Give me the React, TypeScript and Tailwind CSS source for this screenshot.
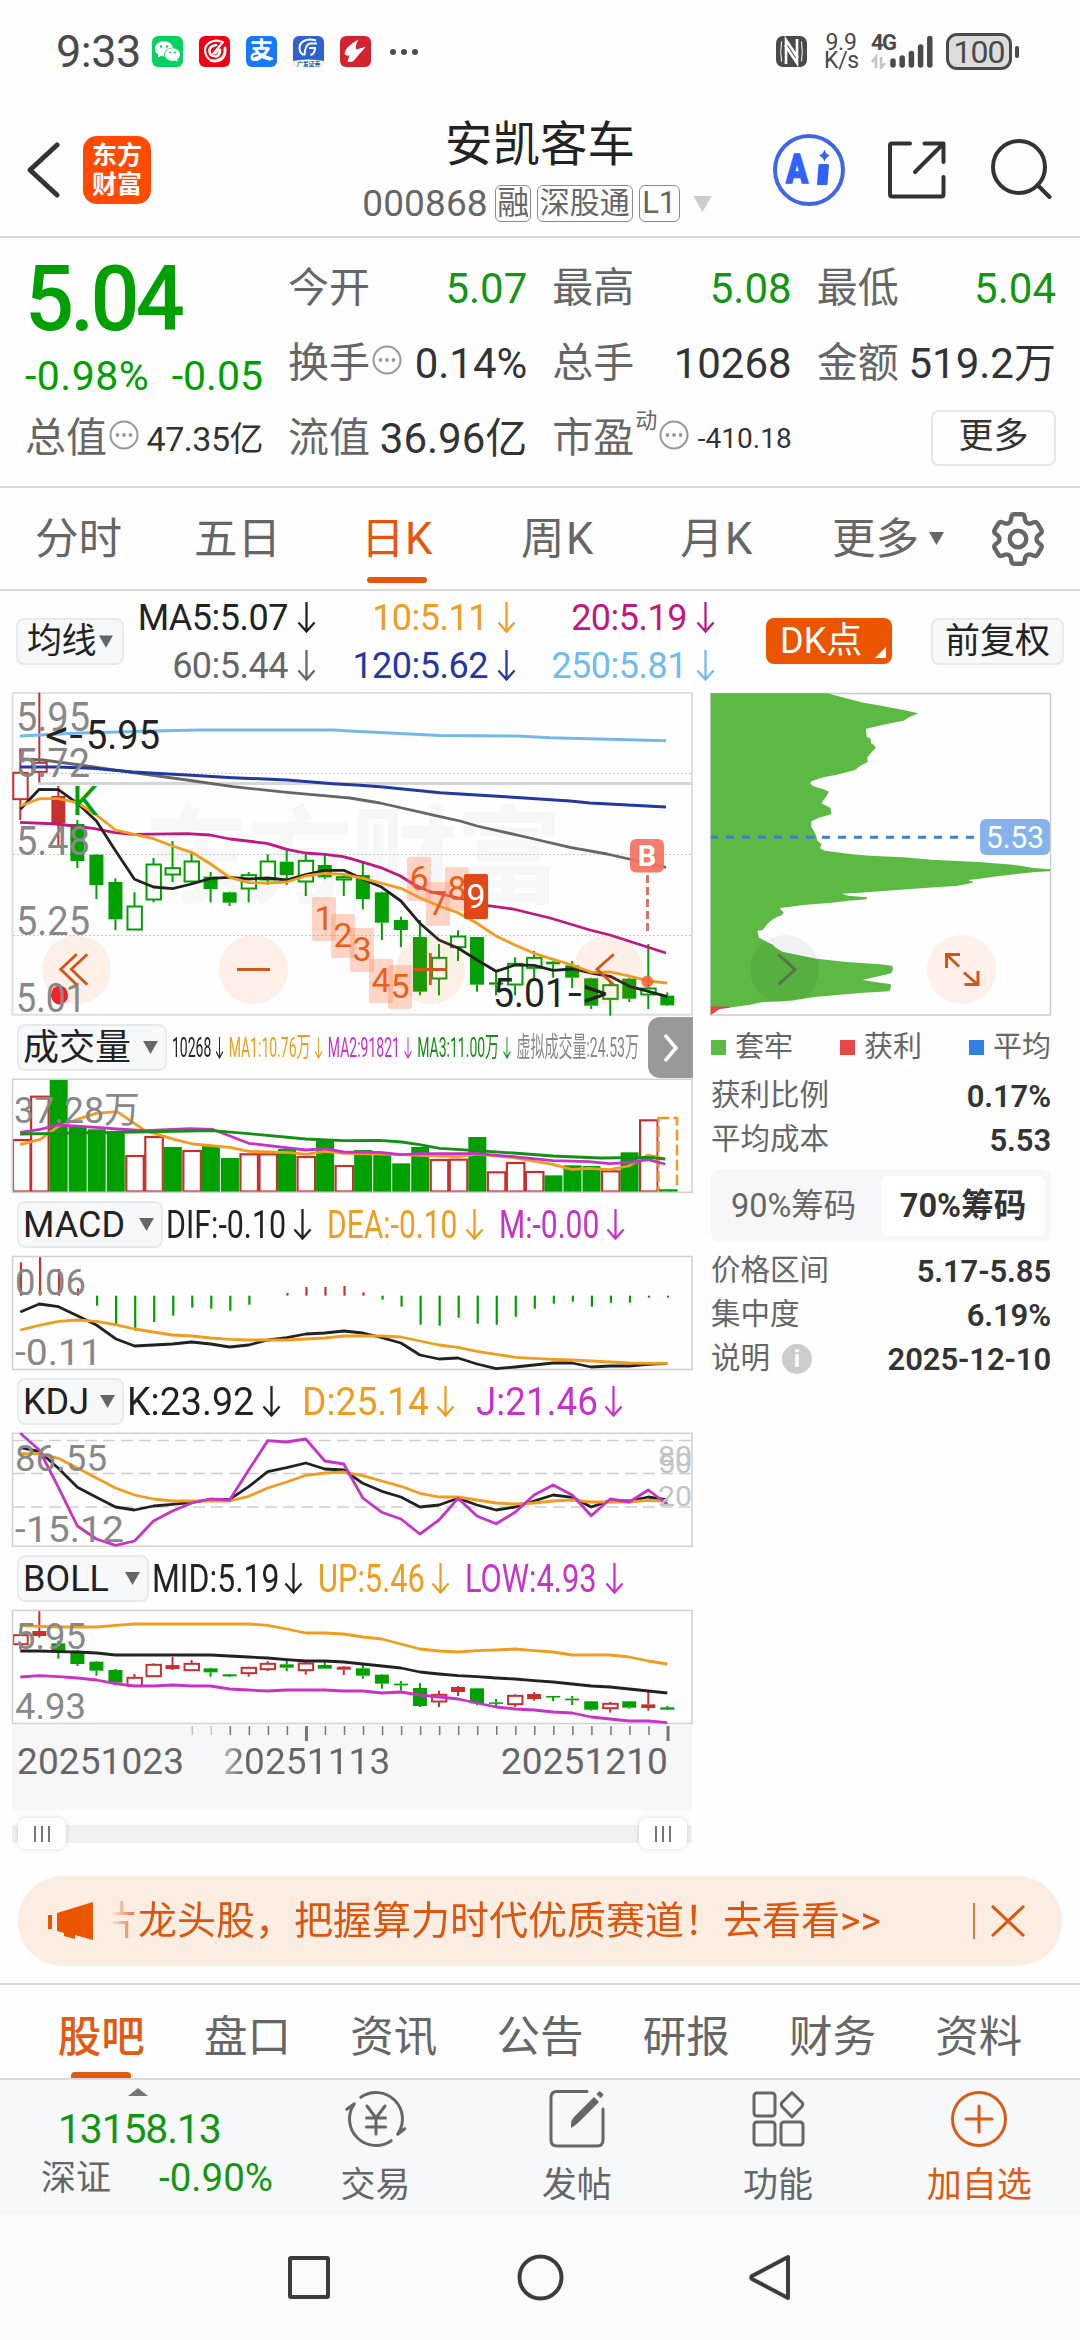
import React from 'react';
import { IoLogoWechat } from 'react-icons/io5';
import { HiOutlineCog6Tooth } from 'react-icons/hi2';

const FONT = "font-[Roboto,'Noto_Sans_CJK_SC',sans-serif]";
const GREEN = '#00a000';
const RED = '#c8302e';
const ORANGE = '#f09c1e';
const PURPLE = '#c832c8';
const BLACK = '#222222';

// x of the n-th trading day, shared by every chart
const dayX = (i: number) => 20.3 + 19.03 * i;

type Candle = [kind: string, high: number, top: number, bottom: number, low: number];

// kind: first letter h = hollow / f = filled, second r = red / g = green
const CANDLES: Candle[] = [
  ['hr', 205, 277, 359, 420], ['hr', 38, 247, 277, 307], ['fr', 318, 348, 430, 500], ['fg', 420, 432, 543, 564],
  ['fg', 522, 524, 615, 657], ['fg', 595, 606, 718, 750], ['hg', 637, 678, 750, 750], ['hg', 534, 552, 660, 667],
  ['hg', 483, 563, 585, 606], ['hg', 513, 543, 606, 612], ['fg', 576, 590, 627, 667], ['fg', 635, 637, 668, 678],
  ['hg', 576, 584, 627, 667], ['hg', 523, 543, 600, 615], ['fg', 510, 545, 585, 615], ['hg', 523, 541, 606, 648],
  ['fg', 523, 555, 592, 597], ['hg', 580, 590, 600, 648], ['fg', 548, 585, 657, 688], ['fg', 635, 637, 728, 780],
  ['fg', 710, 720, 750, 801], ['fg', 720, 771, 935, 946], ['hg', 792, 832, 897, 946], ['hg', 751, 768, 803, 843],
  ['fg', 771, 771, 914, 935], ['fg', 875, 907, 914, 946], ['hg', 832, 850, 915, 946], ['hg', 813, 832, 865, 897],
  ['fg', 843, 845, 853, 893], ['fg', 843, 856, 893, 924], ['fg', 893, 895, 977, 987], ['hg', 905, 914, 958, 1007],
  ['fg', 893, 896, 956, 966], ['hg', 792, 924, 945, 987], ['fg', 937, 947, 976, 978],
];

const MA5 = [388, 328, 329, 370, 423, 512, 598, 621, 626, 612, 595, 592, 597, 594, 600, 584, 571, 571, 597, 622, 663, 730, 780, 804, 840, 874, 855, 856, 871, 867, 879, 889, 919, 934, 950];
const MA10 = [378, 356, 356, 368, 405, 450, 463, 476, 498, 517, 552, 592, 608, 609, 606, 588, 580, 583, 595, 610, 625, 653, 678, 698, 730, 768, 795, 820, 838, 855, 877, 876, 888, 903, 909];

const VOLUMES: [string, number][] = [
  ['r', 387], ['r', 257], ['g', 210], ['g', 350], ['g', 358], ['g', 365], ['r', 435], ['r', 378], ['g', 411],
  ['r', 420], ['g', 408], ['g', 444], ['r', 430], ['r', 430], ['g', 417], ['r', 438], ['g', 393], ['r', 465],
  ['g', 420], ['g', 430], ['g', 460], ['g', 411], ['r', 447], ['r', 446], ['g', 381], ['r', 484], ['r', 456],
  ['r', 483], ['g', 496], ['g', 466], ['g', 468], ['r', 481], ['g', 427], ['r', 328],
];

const MACD_BARS = [757, 739, 777, 835, 887, 944, 962, 936, 917, 893, 896, 902, 884, 857, 849, 831, 831, 828, 847, 869, 890, 944, 947, 923, 941, 944, 920, 896, 881, 875, 890, 878, 878, 863, 863];
const DIF = [906, 882, 890, 917, 945, 986, 1008, 1005, 1002, 996, 1002, 1011, 1005, 990, 983, 972, 969, 963, 969, 983, 999, 1035, 1047, 1044, 1062, 1076, 1071, 1065, 1059, 1059, 1071, 1068, 1068, 1063, 1060];
const DEA = [960, 946, 934, 930, 934, 944, 957, 966, 975, 978, 984, 988, 990, 990, 990, 987, 984, 978, 978, 978, 981, 993, 1005, 1012, 1024, 1033, 1042, 1045, 1048, 1050, 1053, 1056, 1059, 1060, 1060];

const KDJ_K = [233, 244, 295, 352, 382, 411, 420, 408, 403, 397, 388, 388, 350, 305, 293, 279, 297, 300, 340, 364, 381, 411, 405, 385, 405, 420, 411, 393, 375, 382, 411, 392, 393, 381, 390];
const KDJ_D = [252, 250, 265, 294, 324, 354, 375, 387, 393, 393, 393, 393, 379, 354, 336, 316, 309, 306, 317, 333, 349, 370, 381, 381, 390, 399, 402, 399, 393, 390, 396, 396, 396, 391, 393];
const KDJ_J = [190, 240, 352, 468, 507, 526, 513, 453, 423, 399, 387, 390, 300, 212, 216, 207, 273, 282, 384, 427, 447, 492, 450, 385, 438, 461, 427, 375, 345, 375, 437, 387, 396, 360, 403];

const BOLL_UP = [766, 769, 771, 771, 771, 766, 762, 762, 762, 762, 762, 762, 762, 766, 777, 789, 789, 792, 801, 807, 822, 837, 843, 846, 842, 840, 837, 842, 846, 855, 855, 855, 861, 873, 882];
const BOLL_MID = [843, 843, 845, 846, 849, 855, 855, 855, 855, 855, 855, 858, 861, 864, 869, 873, 873, 876, 882, 888, 894, 906, 912, 917, 920, 924, 927, 932, 936, 942, 948, 951, 957, 963, 969];
const BOLL_LOW = [921, 917, 920, 924, 930, 941, 948, 948, 945, 948, 948, 957, 960, 963, 960, 960, 960, 963, 963, 969, 966, 975, 981, 987, 999, 1011, 1017, 1020, 1026, 1029, 1041, 1047, 1053, 1053, 1058];
const BOLL_CANDLES: Candle[] = [
  ['hr', 785, 794, 824, 838], ['fr', 720, 783, 798, 803], ['fg', 812, 820, 847, 866], ['fg', 840, 847, 882, 888],
  ['fg', 873, 875, 902, 917], ['fg', 897, 900, 938, 946], ['hr', 912, 922, 949, 950], ['hr', 880, 883, 920, 921],
  ['fr', 861, 885, 897, 900], ['hr', 870, 880, 902, 903], ['fg', 893, 895, 907, 920], ['fg', 912, 913, 919, 921],
  ['hr', 890, 892, 911, 920], ['hr', 873, 880, 899, 903], ['fg', 868, 883, 893, 903], ['hr', 873, 879, 902, 914],
  ['fg', 873, 885, 896, 896], ['fr', 888, 890, 899, 915], ['fg', 885, 895, 917, 926], ['fg', 912, 914, 941, 956],
  ['fg', 933, 941, 946, 962], ['fg', 939, 954, 1008, 1011], ['hr', 962, 973, 996, 1011], ['fr', 948, 951, 966, 978],
  ['fg', 954, 955, 1000, 1006], ['fg', 987, 997, 1001, 1008], ['hr', 973, 976, 1004, 1011], ['fr', 966, 972, 987, 992],
  ['fg', 978, 978, 981, 993], ['fg', 978, 986, 991, 1005], ['fg', 993, 994, 1019, 1022], ['hr', 996, 1000, 1016, 1028],
  ['fg', 993, 994, 1013, 1016], ['fr', 963, 1003, 1014, 1022], ['fg', 1008, 1012, 1019, 1020],
];

const CHIPS = '410,40 440,47 520,68 562,75 640,90 685,100 660,110 640,122 590,132 528,146 530,170 542,176 543,190 552,195 557,204 546,215 532,232 533,246 510,258 495,270 440,284 400,292 368,302 360,310 370,319 400,328 417,335 408,350 394,370 422,384 424,402 385,414 364,424 364,440 378,465 382,482 395,492 390,505 405,512 480,522 540,527 640,532 725,539 865,546 970,554 1030,564 1080,568 1080,574 1035,576 980,582 910,590 865,597 835,600 852,607 830,612 800,618 735,622 620,630 510,638 456,641 475,647 530,652 530,658 475,662 425,668 340,675 300,680 270,684 273,690 281,697 276,706 262,710 245,720 232,732 218,750 202,752 207,773 230,785 250,795 255,802 277,815 320,824 380,836 470,846 570,853 607,857 609,868 604,880 585,884 545,893 517,900 560,907 603,913 602,925 598,934 520,938 380,950 300,962 215,967 180,974 125,982 62,982 62,40';

const scale = (origin: number, data: number[]) =>
  data.map((v, i) => `${dayX(i).toFixed(1)},${(origin + v / 3).toFixed(1)}`).join(' ');

const squeeze = (points: [number, number][]) =>
  points.map(([x, y]) => `${(x / 2.24).toFixed(1)},${(1010 + y / 3).toFixed(1)}`).join(' ');

const Line = ({ points, color, width = 2.8 }: { points: string; color: string; width?: number }) => (
  <polyline points={points} fill="none" stroke={color} strokeWidth={width} strokeLinejoin="round" />
);

const Candles = ({ data, origin }: { data: Candle[]; origin: number }) => (
  <g>
    {data.map(([kind, high, top, bottom, low], i) => {
      const x = dayX(i);
      const color = kind[1] === 'r' ? RED : GREEN;
      const [h, t, b, l] = [high, top, bottom, low].map((v) => origin + v / 3);
      return (
        <g key={i} stroke={color} strokeWidth={2}>
          <line x1={x} x2={x} y1={h} y2={t} />
          <line x1={x} x2={x} y1={b} y2={l} />
          {kind[0] === 'h' ? (
            <rect x={x - 7} y={t + 0.5} width={14.4} height={Math.max(b - t - 1, 1)} fill="#fff" />
          ) : (
            <rect x={x - 7} y={t} width={14} height={Math.max(b - t, 1.5)} fill={color} stroke="none" />
          )}
        </g>
      );
    })}
  </g>
);

type LabelProps = { x: number; y: number; w: number; size?: number; color?: string; children: string };

const Label = ({ x, y, w, size = 40, color = '#888', children }: LabelProps) => (
  <text x={x} y={y} fontSize={size} fill={color} textLength={w} lengthAdjust="spacingAndGlyphs">{children}</text>
);

const Frame = ({ top, height }: { top: number; height: number }) => (
  <rect x={12.5} y={top} width={679.5} height={height} fill="none" stroke="#d0d0d2" strokeWidth={1.5} />
);

const DownArrow = ({ className = 'w-5 h-[31px]' }: { className?: string }) => (
  <svg viewBox="0 0 20 31" className={className} fill="none" stroke="currentColor" strokeWidth={2.4} preserveAspectRatio="none">
    <path d="M10 0V29M1.5 20.5 10 29.5l8.5-9" />
  </svg>
);

const Dots = ({ className = '' }: { className?: string }) => (
  <svg viewBox="0 0 30 30" className={`w-[30px] h-[30px] shrink-0 ${className}`}>
    <circle cx="15" cy="15" r="13.5" fill="none" stroke="#999" strokeWidth="2" />
    <circle cx="8.5" cy="15" r="1.9" fill="#999" />
    <circle cx="15" cy="15" r="1.9" fill="#999" />
    <circle cx="21.5" cy="15" r="1.9" fill="#999" />
  </svg>
);

const Caret = ({ className }: { className: string }) => (
  <svg viewBox="0 0 16 14" className={className} fill="currentColor"><path d="M0 0h16L8 14z" /></svg>
);

const StatusBar = () => (
  <div className="h-[104px] px-[55px] pb-px flex items-center text-[#4a4a4a]">
    <span className="text-[45px] leading-none tracking-[-0.5px] w-[97px] pl-px">9:33</span>
    <div className="flex gap-4 text-white">
      <div className="w-[31px] h-[31px] rounded-md bg-[#07d160] flex items-center justify-center">
        <IoLogoWechat size={25} />
      </div>
      <svg viewBox="0 0 31 31" className="w-[31px] h-[31px] rounded-md bg-[#f00014]" fill="none" stroke="currentColor" strokeLinecap="round">
        <path d="M22 5.5A11.5 9.5 0 0 0 6 14q.5 6 4 9" strokeWidth="2.2" />
        <path d="M17 9q-7 1-6.500 6.500Q11 20 15 20" strokeWidth="2.600" />
        <path d="M24 6 14.500 17.500q3 0 4.500-4" strokeWidth="2.200" />
        <path d="M26 12q1 12-10 13l-4-.5M21 14q0 5-4 6.500" strokeWidth="2.800" />
      </svg>
      <div className="w-[31px] h-[31px] rounded-md bg-[#1677ff] relative flex justify-center">
        <span className="text-[23px] leading-[29px] font-bold">支</span>
        <svg viewBox="0 0 31 31" className="absolute inset-0" fill="none" stroke="currentColor" strokeWidth="2.200">
          <path d="M13 17.500c-8-1-9.500 6-4 6.500 5 .3 7-4 8.500-6.500M15 18q6 3.500 12 5" />
        </svg>
      </div>
      <div className="w-[31px] h-[31px] rounded-md bg-[#2f62cf] relative overflow-hidden">
        <svg viewBox="0 0 31 31" className="absolute inset-0" fill="none" stroke="currentColor" strokeWidth="2">
          <path d="M23 4.500C13 1.500 6 6 6.500 13q.5 4 4 6M24 7.500H17q-5 1-5.500 12M23 12h-7M22 12q0 6-4.500 7" />
          <path d="M0 25q15-3 31 0v6H0z" fill="#fff" stroke="none" />
        </svg>
        <span className="absolute bottom-0 left-1 text-[6px] leading-[6px] tracking-[-0.2px] font-bold text-[#2f55b0]">广发证券</span>
      </div>
      <svg viewBox="0 0 31 31" className="w-[31px] h-[31px] rounded-md bg-[#d2232e]" fill="currentColor">
        <path d="M18.500 3.500Q5.500 10.500 4.500 17.500q.5 2.500 5 2l-2 6q5 2 8-3L26 10.500l-9.500 3q-2-3 2-10z" />
      </svg>
    </div>
    <div className="flex gap-[5px] ml-[19px]">
      <i className="w-[6px] h-[6px] rounded-full bg-current" />
      <i className="w-[6px] h-[6px] rounded-full bg-current" />
      <i className="w-[6px] h-[6px] rounded-full bg-current" />
    </div>
    <div className="ml-auto flex items-center mr-[6px]">
      <svg viewBox="0 0 31 31" className="w-[31px] h-[31px]">
        <rect width="31" height="31" rx="7" fill="currentColor" />
        <path d="M5.500 5.500q-1.500 10 0 20M25.500 5.500q1.500 10 0 20" fill="none" stroke="#fff" strokeWidth="1" />
        <path d="M10 28V4l12 18M21 3v24L9 9" fill="none" stroke="#fff" strokeWidth="2.600" />
      </svg>
      <div className="ml-[17px] w-[34px] text-[23px] leading-[18px] text-center tracking-[-0.300px]">
        <div>9.9</div>
        <div>K/s</div>
      </div>
      <div className="ml-[13px] relative w-[64px] h-[35px]">
        <span className="absolute left-0 top-0 text-[22px] leading-[18px] font-bold tracking-[-1.500px]">4G</span>
        <svg viewBox="0 0 64 35" className="w-full h-full">
          <g stroke="#c4c4c4" strokeWidth="2.600" fill="none"><path d="M1 28l4-5v11M14 29l-4 5V23" /></g>
          <g stroke="currentColor" strokeWidth="5.500" strokeLinecap="round">
            <path d="M22 27v4M31.200 24v7M40.400 19.500V31M49.600 13v18M58.800 4.500V31" />
          </g>
        </svg>
      </div>
      <div className="ml-[11px] w-[66px] h-[37px] rounded-[11px] border-[3px] border-[#4a4a4a] bg-[#dcdcdc] flex items-center justify-center text-[32px] leading-none tracking-[-1px]">100</div>
      <i className="ml-[3px] w-1 h-3 rounded-sm bg-current" />
    </div>
  </div>
);

const Header = () => (
  <div className="h-[134px] border-b-2 border-[#dadada] flex items-center px-[26px] relative">
    <svg viewBox="0 0 34 56" className="w-[34px] h-[56px]" fill="none" stroke="#333" strokeWidth="5" strokeLinecap="round" strokeLinejoin="round">
      <path d="M31 3 4 28l27 25" />
    </svg>
    <div className="ml-[23px] w-[68px] h-[68px] rounded-[14px] bg-[#ff4a00] text-white font-bold text-[25px] leading-[29px] flex flex-col items-center justify-center">
      <span>东方</span>
      <span>财富</span>
    </div>
    <div className="absolute inset-x-[300px] top-0 h-full flex flex-col items-center">
      <h1 className="text-[47.500px] leading-[48px] text-[#222] mt-[17px]">安凯客车</h1>
      <div className="flex items-center mt-4 text-[#666] whitespace-nowrap -ml-1">
        <span className="text-[37px] leading-9 tracking-[0.100px]">000868</span>
        <span className="ml-[7px] w-9 h-[37px] border-[1.500px] border-[#8a8a8a] rounded-md text-[32px] leading-[34px] text-center tracking-[-1px]">融</span>
        <span className="ml-[6px] w-24 h-[37px] border-[1.500px] border-[#8a8a8a] rounded-md text-[30px] leading-[34px] text-center">深股通</span>
        <span className="ml-[6px] w-[41px] h-[37px] border-[1.500px] border-[#8a8a8a] rounded-md text-[31px] leading-[34px] text-center">L1</span>
        <Caret className="ml-[11px] w-[23px] h-4 text-[#ccc]" />
      </div>
    </div>
    <div className="ml-auto flex items-center mr-[2px]">
      <svg viewBox="0 0 74 74" className="w-[74px] h-[74px]">
        <circle cx="37" cy="37" r="34" fill="none" stroke="#3f66e8" strokeWidth="4" />
        <text x="14" y="50" fontSize="41" fontWeight="900" fill="#2f62ff" stroke="#2f62ff" strokeWidth="1.500" textLength="22" lengthAdjust="spacingAndGlyphs">A</text>
        <path d="M47.500 32h8.500l-1.500 19H46z" fill="#2f62ff" stroke="#2f62ff" strokeWidth="2" strokeLinejoin="round" />
        <path d="M52.500 16.500q1.500 5 5.500 6-4 1.500-5.500 6-1.500-4.500-5.500-6 4-1 5.500-6z" fill="#2f62ff" />
      </svg>
      <svg viewBox="0 0 60 60" className="ml-[41px] w-[60px] h-[60px]" fill="none" stroke="#333" strokeWidth="4" strokeLinecap="round" strokeLinejoin="round">
        <path d="M23 3.500H5q-2 0-2 2V54q0 2.500 2 2.500h49.500q2 0 2-2.500V37M37.500 3.500h19V22M56 4 28 32" />
      </svg>
      <svg viewBox="0 0 62 62" className="ml-[43px] w-[62px] h-[62px]" fill="none" stroke="#333" strokeWidth="4" strokeLinecap="round">
        <circle cx="29" cy="28" r="26" />
        <path d="M47.500 46 59.500 58" />
      </svg>
    </div>
  </div>
);

const Stat = ({ label, value, info, color = 'text-[#333]' }: { label: string; value: string; info?: boolean; color?: string }) => (
  <div className="flex items-center h-[75px] whitespace-nowrap">
    <span className="text-[41px] leading-none text-[#666]">{label}</span>
    {info && <Dots className="ml-[2px] -mt-2" />}
    <span className={`ml-auto text-[42px] leading-none ${color}`}>{value}</span>
  </div>
);

const Quote = () => (
  <div className="h-[250px] border-b-2 border-[#dadada] pl-[25px] pr-[24px] pt-[13px] flex text-[#333]">
    <div className="w-[238px] whitespace-nowrap">
      <div className="text-[90px] leading-[98px] h-[98px] font-medium tracking-[-4px] text-[#00a000] origin-left scale-x-[0.960]">5.04</div>
      <div className="flex justify-between text-[41px] leading-none text-[#00a000] h-[50px] items-center mt-[2px] mb-px">
        <span className="tracking-[0.500px]">-0.98%</span>
        <span>-0.05</span>
      </div>
      <div className="flex items-center h-[73px]">
        <span className="text-[41px] leading-none text-[#666]">总值</span>
        <Dots className="ml-[2px] -mt-2" />
        <span className="ml-auto text-[34px] leading-none tracking-[-0.500px]">47.35亿</span>
      </div>
    </div>
    <div className="ml-[25px] flex-1 grid grid-cols-3 gap-x-[25px] content-start">
      <Stat label="今开" value="5.07" color="text-[#149614]" />
      <Stat label="最高" value="5.08" color="text-[#149614]" />
      <Stat label="最低" value="5.04" color="text-[#149614]" />
      <Stat label="换手" value="0.14%" info />
      <Stat label="总手" value="10268" />
      <Stat label="金额" value="519.2万" />
      <Stat label="流值" value="36.96亿" />
      <div className="flex items-center h-[75px] whitespace-nowrap">
        <span className="text-[41px] leading-none text-[#666]">市盈</span>
        <span className="text-[22px] leading-none text-[#666] -mt-9 ml-px">动</span>
        <Dots className="ml-[2px] -mt-2" />
        <span className="ml-auto text-[28px] leading-none">-410.18</span>
      </div>
      <div className="flex items-center justify-end h-[75px]">
        <button className="w-[125px] h-[56px] border-2 border-[#e6e6e6] rounded-lg text-[35px] leading-none pb-[3px] mb-[2px]">更多</button>
      </div>
    </div>
  </div>
);

const PERIODS = [
  { name: '分时', box: 'w-[86px]' },
  { name: '五日', box: 'w-[86px] ml-[73px]' },
  { name: '日K', box: 'w-[72px] ml-[81px] tracking-[0.500px]', active: true },
  { name: '周K', box: 'w-[74px] ml-[88px] tracking-[1.500px]' },
  { name: '月K', box: 'w-[76px] ml-[85px] tracking-[1.500px]' },
];

const Periods = () => (
  <div className="h-[103px] border-b-2 border-[#dadada] flex items-center pl-[35px] text-[43.500px] leading-none text-[#666] whitespace-nowrap">
    {PERIODS.map((p) => (
      <div key={p.name} className={`relative h-full flex items-center pt-[3px] ${p.box} ${p.active ? 'text-[#e8550a]' : ''}`}>
        {p.name}
        {p.active && <i className="absolute left-[6px] bottom-[6px] w-[60px] h-[6px] rounded-full bg-[#e8550a]" />}
      </div>
    ))}
    <span className="ml-[76px] pt-[3px]">更多</span>
    <Caret className="ml-[10px] w-[15px] h-[13px]" />
    <HiOutlineCog6Tooth className="ml-[41px] w-[66px] h-[66px]" strokeWidth={1.6} />
  </div>
);

const AVERAGES = [
  { text: 'MA5:5.07', color: 'text-[#222]' },
  { text: '10:5.11', color: 'text-[#f09c1e]' },
  { text: '20:5.19', color: 'text-[#c01880]' },
  { text: '60:5.44', color: 'text-[#666]' },
  { text: '120:5.62', color: 'text-[#2438a0]' },
  { text: '250:5.81', color: 'text-[#70bcec]' },
];

const Averages = () => (
  <div className="h-[99px] flex items-center pl-4 pr-4 pt-px whitespace-nowrap">
    <button className="w-[108px] h-[47px] border-2 border-[#e8e9ed] rounded-lg bg-[#f7f8fa] flex items-center justify-center text-[35px] leading-none text-[#222] tracking-[-0.500px]">
      <span>均线</span><Caret className="ml-[3px] w-[14px] h-[13px] text-[#666]" />
    </button>
    <div className="grid grid-cols-[192px_200px_199px] justify-items-end">
      {AVERAGES.map((a) => (
        <div key={a.text} className={`flex items-center h-12 pt-px text-[36px] leading-none tracking-[-0.500px] ${a.color}`}>
          {a.text}<DownArrow className="ml-[9px] w-[19px] h-[31px]" />
        </div>
      ))}
    </div>
    <button className="ml-[51px] w-[126px] h-[46px] rounded-lg bg-[#ec5500] text-white text-[36px] leading-none relative text-left pl-[14px]">
      DK点
      <svg viewBox="0 0 11 11" className="absolute right-[6px] bottom-[6px] w-[11px] h-[11px]" fill="#fff"><path d="M11 0v11H0z" /></svg>
    </button>
    <button className="ml-auto w-[133px] h-[47px] border-2 border-[#e8e9ed] rounded-lg bg-[#f7f8fa] text-[35px] leading-none text-[#222]">前复权</button>
  </div>
);

const MARKS: [string, number, number][] = [
  ['1', 312, 897], ['2', 331, 914], ['3', 350, 928], ['4', 369, 959], ['5', 388, 965], ['6', 407, 857], ['7', 426, 882], ['8', 445, 867],
];

const PriceChart = () => (
  <svg viewBox="0 690 700 327" className="block w-[700px] h-[327px]">
    <g fill="#f7f7f8" fontSize="106" fontWeight="700">
      <text x="143" y="895">东</text>
      <text x="247" y="895">方</text>
      <text x="351" y="895">财</text>
      <text x="456" y="895">富</text>
    </g>
    <rect x={12.5} y={693} width={679.5} height={321.700} fill="none" stroke="#dedfe2" strokeWidth={2} />
    <g stroke="#c8c8c8" strokeWidth="1" strokeDasharray="2 2">
      <path d="M13 773.500H692M13 854.500H692M13 935.500H692" />
    </g>
    <path d="M38 783.500H692" stroke="#d5d6da" strokeWidth="3" />
    <Candles data={CANDLES} origin={680} />
    <Line color="#74b9e8" points="20,736 80,733 153,731 200,730 333,730 350,731 440,735.500 517,736 550,737.700 666,740.700" width={3} />
    <Line color="#666" points="20,759 43,760 80,765 133,772.700 187,780 233,786.700 287,792.300 343,797.300 350,798 380,803 440,816.700 460,821 477,826 530,838 570,847.300 607,854 666,867.300" />
    <Line color="#2438a0" points="20,767 57,767 93,768.300 133,772 187,775 233,777.700 287,780 333,783.700 360,785.300 383,787 440,792.700 513,797.300 570,801 590,803 666,807" width={3} />
    <Line color="#c01880" points="20,822.300 57,824 93,828.300 115,832.700 133,834.300 187,833.700 210,835 230,839 267,843.300 287,849.300 305,853 325,854.300 343,856.700 350,858.300 380,867.300 400,875.700 413,884 430,891.700 463,899 488,905.700 513,909 550,918 590,930 610,935 666,953" />
    <Line color={BLACK} points={scale(680, MA5)} />
    <Line color={ORANGE} points={scale(680, MA10)} />
    <Label x={16} y={731} w={74}>5.95</Label>
    <Label x={16} y={777} w={74}>5.72</Label>
    <Label x={16} y={854.500} w={74}>5.48</Label>
    <Label x={16} y={935} w={74}>5.25</Label>
    <Label x={45} y={748.500} w={38} color={BLACK}>&lt;-</Label>
    <Label x={86} y={748.500} w={74} color={BLACK}>5.95</Label>
    <Label x={72} y={815} w={26} color={GREEN}>K</Label>
    {MARKS.map(([n, x, y]) => (
      <g key={n}>
        <rect x={x} y={y} width={24} height={44} rx={2} fill="#ff8a5c" fillOpacity={0.35} />
        <text x={x + 12} y={y + 33} fontSize={34} fill="#ea5c18" textAnchor="middle">{n}</text>
      </g>
    ))}
    <rect x={464} y={874} width={24} height={45} rx={2} fill="#e04818" />
    <text x={476} y={908} fontSize={34} fill="#fff" textAnchor="middle">9</text>
    <path d="M647.500 875v58" stroke="#d87468" strokeWidth="3" strokeDasharray="8 4" />
    <rect x={630} y={839} width={34} height={33.500} rx={6} fill="#f4705f" fillOpacity={0.92} />
    <text x={647} y={866} fontSize={29} fontWeight={700} fill="#fff" textAnchor="middle">B</text>
    <circle cx={647.300} cy={981.500} r={6} fill="#ff5a38" fillOpacity={0.85} />
    <g fill="#ff6a1a" fillOpacity={0.1}>
      <circle cx={76.500} cy={969.700} r={34.500} />
      <circle cx={253.500} cy={969.700} r={34.500} />
      <circle cx={430.500} cy={969.700} r={34.500} />
      <circle cx={608} cy={969.700} r={34.500} />
    </g>
    <ellipse cx={59.500} cy={995} rx={8.500} ry={9.500} fill="#f52222" />
    <Label x={16} y={1011.500} w={70}>5.01</Label>
    <Label x={493} y={1007} w={73} color={BLACK}>5.01</Label>
    <Label x={568} y={1007} w={40} color={BLACK}>-&gt;</Label>
    <g fill="none" stroke="#d0561a" strokeWidth="2.800">
      <path d="M76.700 954.300 60.700 969.300l16 15.400M87.300 954.300 71.300 969.300l16 15.400M237 969.500h33M414 969.500h33M430.300 953v32M613.700 954.300 597 969.300l16.700 15.400" />
    </g>
  </svg>
);

const VolumeChart = () => (
  <svg viewBox="0 1078 700 116" className="block w-[700px] h-[116px]">
    {VOLUMES.map(([kind, v], i) => {
      const top = 1010 + v / 3;
      const x = dayX(i) + 0.3;
      return kind === 'r' ? (
        <rect key={i} x={Math.max(x - 8.500, 13)} y={top + 1} width={17.500} height={1190.500 - top} fill="#fff" stroke={RED} strokeWidth={2.200} />
      ) : (
        <rect key={i} x={x - 9} y={top} width={18} height={1192 - top} fill={GREEN} />
      );
    })}
    <rect x={658.500} y={1118} width={18.500} height={73.500} fill="#fff" stroke={ORANGE} strokeWidth={2.500} strokeDasharray="11 4" />
    <path d="M659 1190.500h18" stroke={GREEN} strokeWidth="2.500" />
    <Frame top={1079.300} height={113} />
    <Line color={ORANGE} points={squeeze([[45, 404], [90, 388], [130, 350], [180, 325], [215, 310], [262, 305], [325, 362], [390, 388], [432, 402], [515, 412], [557, 424], [650, 428], [685, 433], [728, 424], [770, 430], [900, 434], [985, 438], [1026, 440], [1068, 432], [1150, 443], [1238, 463], [1280, 478], [1320, 475], [1365, 479], [1408, 468], [1452, 435], [1490, 447]])} />
    <Line color={PURPLE} points={squeeze([[45, 367], [90, 358], [130, 345], [215, 352], [262, 357], [325, 362], [425, 356], [475, 358], [515, 378], [557, 400], [685, 420], [728, 416], [770, 426], [850, 427], [900, 434], [940, 431], [1068, 431], [1150, 440], [1238, 452], [1320, 455], [1365, 461], [1408, 458], [1452, 449], [1490, 462]])} />
    <Line color="#149014" points={squeeze([[45, 372], [130, 370], [302, 366], [475, 362], [557, 371], [685, 387], [770, 392], [850, 391], [900, 396], [940, 404], [985, 415], [1068, 422], [1150, 429], [1238, 438], [1345, 444], [1452, 442], [1490, 447]])} />
    <Label x={14} y={1122.500} w={126} size={37}>37.28万</Label>
  </svg>
);

const MacdChart = () => (
  <svg viewBox="0 1255 700 116" className="block w-[700px] h-[116px]">
    {MACD_BARS.map((v, i) => (
      <path key={i} d={`M${dayX(i) + 0.7} ${1010 + v / 3}V${1010 + 857 / 3}`} stroke={v < 857 ? RED : GREEN} strokeWidth="2.200" />
    ))}
    <Frame top={1256.500} height={113} />
    <Line color={BLACK} points={scale(1010, DIF)} />
    <Line color={ORANGE} points={scale(1010, DEA)} />
    <Label x={15} y={1295} w={71} size={37}>0.06</Label>
    <Label x={15} y={1364.500} w={87} size={37}>-0.11</Label>
  </svg>
);

const KdjChart = () => (
  <svg viewBox="0 1432 700 116" className="block w-[700px] h-[116px]">
    <g stroke="#cfcfcf" strokeWidth="1.500" strokeDasharray="12 6">
      <path d="M13 1440.500H692M13 1473.500H692M13 1507H692" />
    </g>
    <Frame top={1433.300} height={113} />
    <Line color={BLACK} points={scale(1370, KDJ_K)} />
    <Line color={ORANGE} points={scale(1370, KDJ_D)} />
    <Line color={PURPLE} points={scale(1370, KDJ_J)} />
    <Label x={15} y={1471} w={92} size={37}>86.55</Label>
    <Label x={15} y={1541.500} w={109} size={37}>-15.12</Label>
    <Label x={658} y={1466} w={34} size={28} color="#c4c4c4">80</Label>
    <Label x={658} y={1473} w={34} size={28} color="#c4c4c4">50</Label>
    <Label x={658} y={1506} w={34} size={28} color="#c4c4c4">20</Label>
  </svg>
);

const BollChart = () => (
  <svg viewBox="0 1609 700 116" className="block w-[700px] h-[116px]">
    <Candles data={BOLL_CANDLES} origin={1370} />
    <Frame top={1610.500} height={113} />
    <Line color={ORANGE} points={scale(1370, BOLL_UP)} />
    <Line color={BLACK} points={scale(1370, BOLL_MID)} />
    <Line color={PURPLE} points={scale(1370, BOLL_LOW)} />
    <Label x={15} y={1649} w={71} size={37}>5.95</Label>
    <Label x={15} y={1719} w={71} size={37}>4.93</Label>
  </svg>
);

const IndicatorButton = ({ name, box }: { name: string; box: string }) => (
  <button className={`h-[47px] border-2 border-[#e8e9ed] rounded-lg bg-[#f7f8fa] flex items-center justify-between pl-[4px] pr-[7px] text-[36px] leading-none text-[#222] whitespace-nowrap shrink-0 ${box}`}>
    <span>{name}</span>
    <Caret className="w-[15px] h-[13px] text-[#666]" />
  </button>
);

// box is the room the text takes once it has been condensed
type Reading = { text: string; color: string; box: string; fit: string };

const Readings = ({ name, box, gap, items }: { name: string; box: string; gap: string; items: Reading[] }) => (
  <div className="h-[61px] pl-[17px] flex items-center whitespace-nowrap">
    <IndicatorButton name={name} box={box} />
    <div className={`flex ml-[3px] ${gap}`}>
      {items.map((r) => (
        <div key={r.text} className={`flex items-center text-[38px] leading-none shrink-0 ${r.color}`}>
          <div className={r.box}><span className={`inline-block origin-left ${r.fit}`}>{r.text}</span></div>
          <DownArrow className="w-[19px] h-[31px]" />
        </div>
      ))}
    </div>
  </div>
);

const VolumeReadings = () => (
  <div className="h-[61px] pl-[17px] flex items-center whitespace-nowrap relative">
    <IndicatorButton name="成交量" box="w-[150px]" />
    <div className="absolute left-[172px] w-[934px] flex items-center justify-between origin-left scale-x-50 text-[28px] leading-none">
      <span className="flex items-center text-[#222]">10268<DownArrow className="ml-2 w-4 h-[22px]" /></span>
      <span className="flex items-center text-[#f09c1e]">MA1:10.76万<DownArrow className="ml-2 w-4 h-[22px]" /></span>
      <span className="flex items-center text-[#c832c8]">MA2:91821<DownArrow className="ml-2 w-4 h-[22px]" /></span>
      <span className="flex items-center text-[#149014]">MA3:11.00万<DownArrow className="ml-2 w-4 h-[22px]" /></span>
      <span className="text-[#888]">虚拟成交量:24.53万</span>
    </div>
    <div className="ml-auto mr-[7px] w-[45px] h-[61px] rounded-l-xl bg-[#999] flex items-center justify-center">
      <svg viewBox="0 0 16 28" className="w-4 h-7" fill="none" stroke="#fff" strokeWidth="3.500"><path d="M2 1l11 13L2 27" /></svg>
    </div>
  </div>
);

const DateAxis = () => (
  <div className="ml-3 w-[680px] h-[84px] mt-px bg-[#f7f7f9] text-[#666]">
    <svg viewBox="12 1726 680 16" className="block w-[680px] h-4" stroke="#777" strokeWidth="1.500">
      {Array.from({ length: 26 }, (_, k) => k + 9).map((i) => {
        const major = i === 15 || i === 34;
        const x = dayX(i) + 0.700;
        return <line key={i} x1={x} x2={x} y1={1726} y2={major ? 1741 : 1735} strokeWidth={major ? 3 : 1.500} opacity={i < 11 ? 0.4 : 1} />;
      })}
    </svg>
    <div className="flex pl-[5px] pr-[24px] text-[37px] leading-[40px] tracking-[0.100px]">
      <span>20251023</span>
      <span className="ml-[39px] bg-[linear-gradient(to_right,#bbb,#666_22px)] bg-clip-text text-transparent">20251113</span>
      <span className="ml-auto">20251210</span>
    </div>
  </div>
);

const SliderHandle = () => (
  <div className="w-12 h-[31px] rounded-lg bg-white shadow-[0_0_5px_rgba(0,0,0,0.15)] flex items-center justify-center gap-[5px]">
    <i className="w-[2px] h-4 bg-[#777]" />
    <i className="w-[2px] h-4 bg-[#777]" />
    <i className="w-[2px] h-4 bg-[#777]" />
  </div>
);

const ChipChart = () => (
  <svg viewBox="700 690 380 327" className="block w-[380px] h-[327px]">
    <rect x={711} y={693.500} width={339.500} height={321.500} fill="none" stroke="#cccccf" strokeWidth={1.500} />
    <g transform="translate(690 680) scale(0.33333)">
      <polygon points={CHIPS} fill="#5cb944" />
      <polygon points="62,979 128,980 115,984 90,987 80,993 62,1006" fill="#e04848" />
    </g>
    <path d="M711 837.300H975" stroke="#3f80d0" strokeWidth="3" strokeDasharray="8 8" strokeDashoffset="1" />
    <rect x={980} y={819} width={70} height={36} rx={6} fill="#86b2ea" />
    <text x={986} y={848} fontSize={32} fill="#fff" textLength={58} lengthAdjust="spacingAndGlyphs">5.53</text>
    <circle cx={784.600} cy={969.500} r={34.500} fill="#000" fillOpacity={0.05} />
    <path d="M778.500 954.500 795 969.500l-16.500 15" fill="none" stroke="#5a7050" strokeWidth="3" />
    <circle cx={961.500} cy={969.500} r={34.500} fill="#fff1e9" />
    <path d="M960 954.500H946.500V968M947 955l12 11.500M964.500 984.500H978V971M977.500 984.500l-13.500-12" fill="none" stroke="#d0561a" strokeWidth="3" />
  </svg>
);

const ChipRow = ({ label, value, info }: { label: string; value: string; info?: boolean }) => (
  <div className="flex items-center h-11 text-[29.500px] leading-none">
    <span className="text-[#666]">{label}</span>
    {info && (
      <span className="ml-3 w-[30px] h-[30px] rounded-full bg-[#ccc] text-white text-[24px] leading-[30px] font-bold text-center">i</span>
    )}
    <span className="ml-auto text-[31px] font-semibold text-[#333] tracking-[-0.100px]">{value}</span>
  </div>
);

const ChipPanel = () => (
  <div className="w-[380px]">
    <ChipChart />
    <div className="pl-[11px] pr-[29px] text-[#666]">
      <div className="h-[57px] pt-1 flex items-center justify-between text-[29px] leading-none">
        <span className="flex items-center gap-[9px]"><i className="w-[15px] h-[15px] bg-[#5cb944]" />套牢</span>
        <span className="flex items-center gap-[9px]"><i className="w-[15px] h-[15px] bg-[#e84848]" />获利</span>
        <span className="flex items-center gap-[9px]"><i className="w-[15px] h-[15px] bg-[#3380e4]" />平均</span>
      </div>
      <ChipRow label="获利比例" value="0.17%" />
      <ChipRow label="平均成本" value="5.53" />
      <div className="mt-2 mb-[7px] h-[72px] rounded-lg bg-[#f7f7fa] p-[6px] flex items-center text-[32.500px] leading-none whitespace-nowrap">
        <span className="flex-1 pl-[14px]">90%筹码</span>
        <span className="w-[164px] h-[60px] rounded-md bg-white text-[#333] font-bold flex items-center justify-center">70%筹码</span>
      </div>
      <ChipRow label="价格区间" value="5.17-5.85" />
      <ChipRow label="集中度" value="6.19%" />
      <ChipRow label="说明" value="2025-12-10" info />
    </div>
  </div>
);

const Banner = () => (
  <div className="mx-[18px] mt-[18px] h-[90px] rounded-full bg-[#fcede3] flex items-center pl-[30px] pr-[37px] text-[#dc560f]">
    <svg viewBox="0 0 45 40" className="w-[45px] h-10 shrink-0" fill="#ec5500">
      <path d="M0 14h4v14H0zM9 12 45 1v38l-18-5v4l-11-3v-3l-7-2z" />
    </svg>
    <div className="ml-[18px] w-[830px] overflow-hidden whitespace-nowrap text-[39px] leading-[56px] [mask-image:linear-gradient(to_right,transparent,black_30px)]">
      <span className="-ml-3">片龙头股，把握算力时代优质赛道！去看看&gt;&gt;</span>
    </div>
    <i className="ml-auto w-[2px] h-9 bg-[#dc7a40]" />
    <svg viewBox="0 0 34 32" className="ml-4 w-[34px] h-8" fill="none" stroke="currentColor" strokeWidth="3"><path d="M1 1l32 30M33 1 1 31" /></svg>
  </div>
);

const SECTIONS = ['股吧', '盘口', '资讯', '公告', '研报', '财务', '资料'];

const SectionTabs = () => (
  <div className="mt-[17px] h-[97px] border-y-2 border-[#dadada] px-7 flex text-[43.500px] leading-none text-[#666]">
    {SECTIONS.map((s, i) => (
      <div key={s} className={`flex-1 relative flex items-center justify-center pt-[15px] pb-[3px] ${i === 0 ? 'text-[#e05a12] font-medium' : ''}`}>
        {s}
        {i === 0 && <i className="absolute bottom-0 w-[60px] h-[6px] rounded-t bg-[#e05a12]" />}
      </div>
    ))}
  </div>
);

const ActionIcon = ({ children }: { children: React.ReactNode }) => (
  <svg viewBox="0 0 66 60" className="w-[66px] h-[60px]" fill="none" stroke="currentColor" strokeWidth="3" strokeLinecap="round" strokeLinejoin="round">{children}</svg>
);

const ACTIONS = [
  {
    name: '交易',
    icon: <path d="M17.800 8.300A26.500 26.500 0 0 1 54.700 45.200l7-5.500M48.200 51.700A26.500 26.500 0 0 1 11.300 14.800l-7.500 5.500M24 17l9 12 9-12M33 29v16M23.500 29h19M23.500 38h19" />,
  },
  {
    name: '发帖',
    icon: (
      <>
        <path d="M43 2.500H13q-6 0-6 6V51q0 6 6 6h40q6 0 6-6V20" />
        <path d="M27 35q0-4 4-8L50 8l5 5-19 19q-4 4-9 7z" fill="currentColor" stroke="none" />
        <path d="m53 5 3-2.500 3 3-2 3z" fill="currentColor" strokeWidth="1" />
      </>
    ),
  },
  {
    name: '功能',
    icon: (
      <>
        <rect x="9" y="4" width="21" height="23" rx="3" />
        <rect x="9" y="33" width="21" height="23" rx="3" />
        <rect x="36" y="33" width="22" height="23" rx="3" />
        <path d="m47 3.500 10 10q1.500 2 0 4L47 28l-10-10.500q-1.500-2 0-4z" />
      </>
    ),
  },
  {
    name: '加自选',
    icon: (
      <>
        <circle cx="33" cy="30" r="26.500" />
        <path d="M20 30h26M33 17v26" />
      </>
    ),
  },
];

const BottomBar = () => (
  <div className="h-[135px] bg-[#f7f8fa] flex whitespace-nowrap">
    <div className="w-[275px] relative pl-[41px] pt-[25px]">
      <svg viewBox="0 0 20 8" className="absolute left-[128px] top-[8px] w-5 h-2" fill="#777"><path d="M10 0l10 8H0z" /></svg>
      <div className="ml-[17px] text-[41px] leading-[48px] tracking-[-1.200px] text-[#149614]">13158.13</div>
      <div className="flex items-center justify-between pr-[2px] h-[51px] leading-none">
        <span className="text-[35px] text-[#666]">深证</span>
        <span className="text-[38.500px] text-[#149614]">-0.90%</span>
      </div>
    </div>
    {ACTIONS.map((a) => (
      <div key={a.name} className={`flex-1 flex flex-col items-center pt-[9px] ${a.name === '加自选' ? 'text-[#dc5a14]' : 'text-[#666]'}`}>
        <ActionIcon>{a.icon}</ActionIcon>
        <span className="mt-[19px] text-[35px] leading-9">{a.name}</span>
      </div>
    ))}
  </div>
);

const SystemNav = () => (
  <div className="h-[126px] bg-[#fbfbfb] relative flex items-center justify-center">
    <svg viewBox="0 0 504 50" className="w-[504px] h-[50px] -ml-[3px]" fill="none" stroke="#3c3c3c" strokeWidth="4" strokeLinejoin="round">
      <rect x="3" y="5" width="38" height="39" rx="1" />
      <circle cx="253.500" cy="24.500" r="21" />
      <path d="M501 4v41L465 26q-1.500-1.500 0-3z" />
    </svg>
  </div>
);

const App: React.FC = () => (
  <div className={`w-[1080px] h-[2340px] overflow-hidden bg-[#fefefe] ${FONT}`}>
    <StatusBar />
    <Header />
    <Quote />
    <Periods />
    <Averages />
    <div className="flex">
      <div className="w-[700px]">
        <PriceChart />
        <VolumeReadings />
        <VolumeChart />
        <Readings name="MACD" box="w-[146px]" gap="gap-[15px]" items={[
          { text: 'DIF:-0.10', color: 'text-[#222]', box: 'w-[127px]', fit: 'scale-x-[0.800]' },
          { text: 'DEA:-0.10', color: 'text-[#f09c1e]', box: 'w-[138px]', fit: 'scale-x-[0.790]' },
          { text: 'M:-0.00', color: 'text-[#c832c8]', box: 'w-[107px]', fit: 'scale-x-[0.790]' },
        ]} />
        <MacdChart />
        <Readings name="KDJ" box="w-[107px]" gap="gap-[21px]" items={[
          { text: 'K:23.92', color: 'text-[#222]', box: 'w-[135px]', fit: 'scale-x-[0.990]' },
          { text: 'D:25.14', color: 'text-[#f09c1e]', box: 'w-[134px]', fit: 'scale-x-[0.980]' },
          { text: 'J:21.46', color: 'text-[#c832c8]', box: 'w-[128px]', fit: 'scale-x-[0.970]' },
        ]} />
        <KdjChart />
        <Readings name="BOLL" box="w-[132px]" gap="gap-[15px]" items={[
          { text: 'MID:5.19', color: 'text-[#222]', box: 'w-[132px]', fit: 'scale-x-[0.840]' },
          { text: 'UP:5.46', color: 'text-[#f09c1e]', box: 'w-[113px]', fit: 'scale-x-[0.810]' },
          { text: 'LOW:4.93', color: 'text-[#c832c8]', box: 'w-[140px]', fit: 'scale-x-[0.810]' },
        ]} />
        <BollChart />
        <DateAxis />
        <div className="ml-3 mt-[8px] w-[680px] h-[31px] pl-[6px] pr-[5px] flex items-center justify-between bg-[linear-gradient(#f0f1f3,#f0f1f3)] bg-[length:100%_18px] bg-no-repeat bg-center">
          <SliderHandle />
          <SliderHandle />
        </div>
      </div>
      <ChipPanel />
    </div>
    <div className="h-[9px]" />
    <Banner />
    <SectionTabs />
    <BottomBar />
    <SystemNav />
  </div>
);

export default App;
